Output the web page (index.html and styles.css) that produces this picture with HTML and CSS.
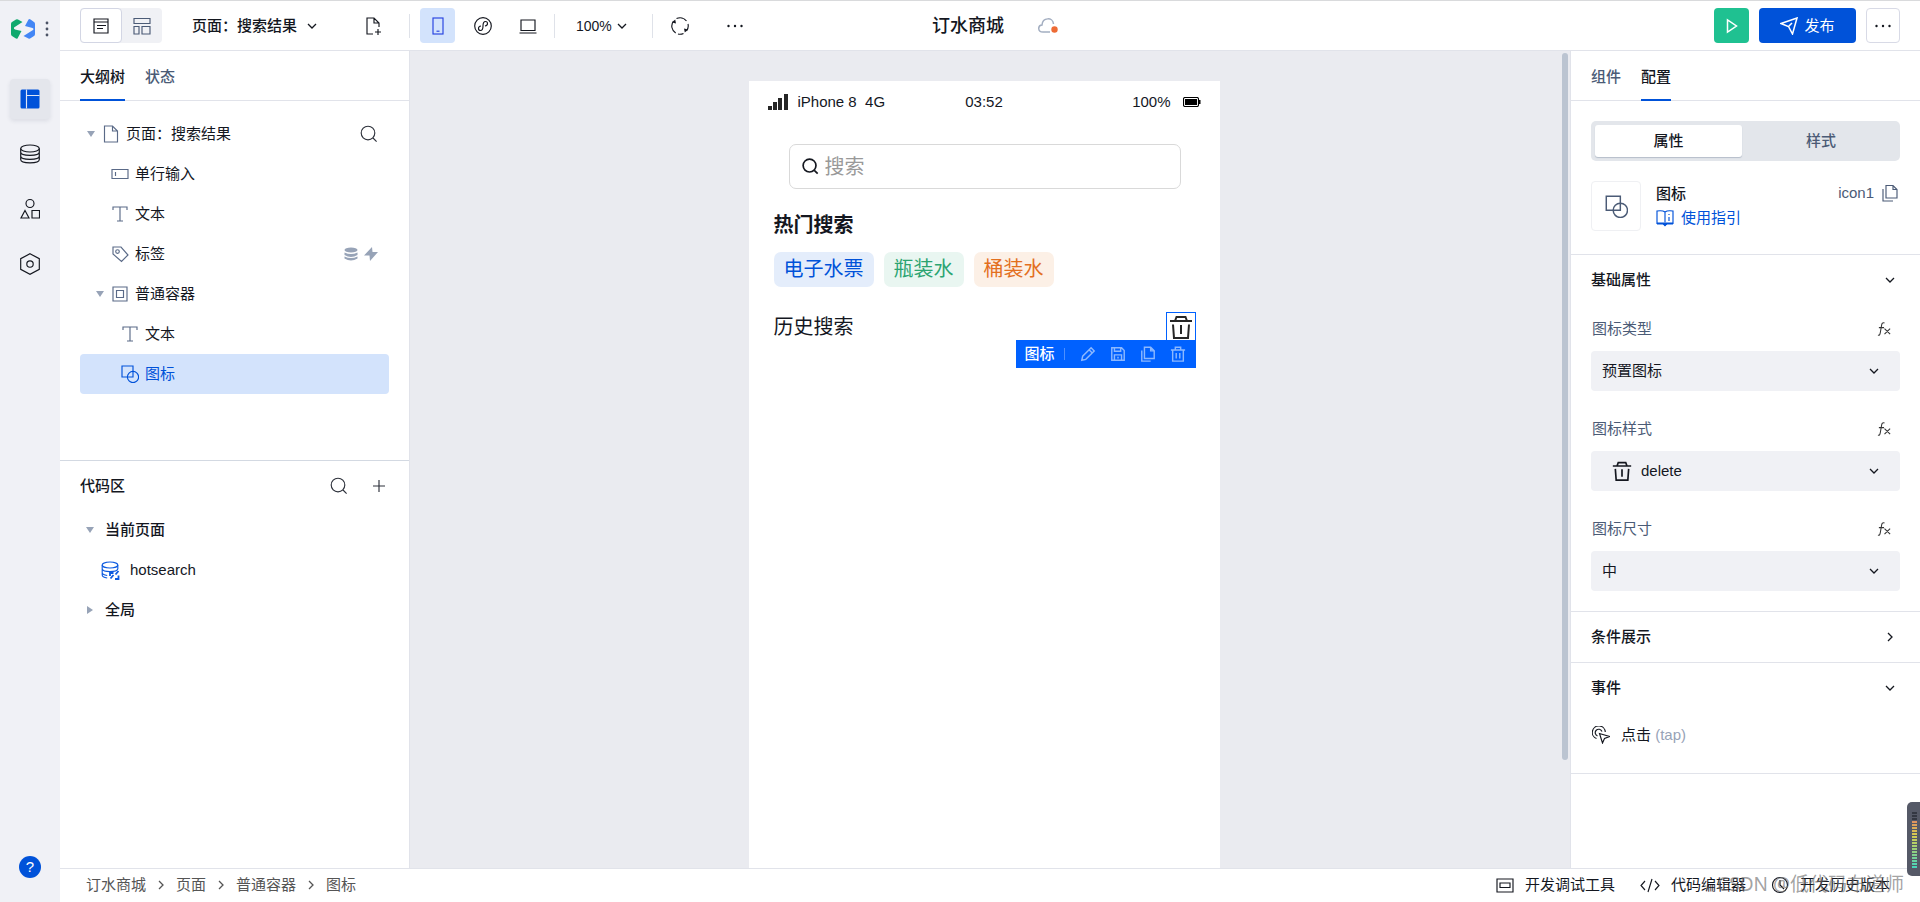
FILE: index.html
```html
<!DOCTYPE html>
<html lang="zh-CN">
<head>
<meta charset="utf-8">
<title>订水商城</title>
<link rel="stylesheet" href="styles.css">
</head>
<body>
<svg class="sprite" aria-hidden="true">
  <symbol id="chevron" viewBox="0 0 12 12"><path d="M2 4l4 4 4-4"/></symbol>
  <symbol id="chevron-right" viewBox="0 0 12 12"><path d="M4 2l4 4-4 4"/></symbol>
  <symbol id="search" viewBox="0 0 18 18"><circle cx="8" cy="8" r="6.8"/><path d="M13 13l3.6 3.6"/></symbol>
  <symbol id="type" viewBox="0 0 18 18"><path d="M2 5V2h14v3M9 2v14M6 16h6"/></symbol>
  <symbol id="shape" viewBox="0 0 18 18"><path d="M1 1h11v11H1z"/><circle cx="12" cy="12" r="5.6"/></symbol>
  <symbol id="trash" viewBox="0 0 24 24"><path d="M1 6h22M6 6l1.500-4h9L18 6M4 9.500L5 23h14l1-13.500M12 10v9"/></symbol>
  <symbol id="copy" viewBox="0 0 18 18"><path d="M5 1.500h7l4 4V14H5zM12 1.500v4h4M2 5v12h10"/></symbol>
  <symbol id="fx" viewBox="0 0 16 16"><path d="M8 1.500c-2-.8-2.800.5-3.200 3L3.500 12c-.3 2-1 3-2.500 2.500M2 6.500h5.500M8 7.500l6 6M14 7.500l-6 6"/></symbol>
  <symbol id="more" viewBox="0 0 18 18"><g fill="currentColor" stroke="none"><circle cx="2.500" cy="9" r="1.200"/><circle cx="9" cy="9" r="1.200"/><circle cx="15.500" cy="9" r="1.200"/></g></symbol>
</svg>
<div class="app">
  <nav class="rail" aria-label="主导航">
    <div class="brand">
      <svg class="logo" viewBox="0 0 24 20"><path fill="#10a96e" d="M5 .6Q6 0 7 .6L11.500 3 3 8.500Q2.500 10 4 10.500l6.500 1.500L6.500 19.500Q5.500 20 4.500 19.300L1 17Q0 16.300 0 15V5Q0 3.700 1 3z"/><path fill="#4386f5" d="M17.500.4q1-.6 2 0L23 3q1 .7 1 2v10q0 1.300-1 2l-3.500 2.300q-1 .7-2 .1L12.500 17 22 11q1.200-1.200-.5-2L14 7z"/></svg>
      <svg class="dots" viewBox="0 0 4 16"><circle cx="2" cy="2" r="1.400"/><circle cx="2" cy="8" r="1.400"/><circle cx="2" cy="14" r="1.400"/></svg>
    </div>
    <div class="rail-items">
      <button class="rail-btn active" aria-label="编辑器"><svg viewBox="0 0 20 20"><rect x=".5" y=".5" width="19" height="19" rx="1.500" fill="currentColor" stroke="none"/><path d="M6.500 .5v19M6.500 6.500h13" stroke="#dfe6f5"/></svg></button>
      <button class="rail-btn" aria-label="数据源"><svg viewBox="0 0 20 20"><ellipse cx="10" cy="4.500" rx="9.300" ry="3.500"/><path d="M.7 4.500v11c0 4.500 18.600 4.500 18.600 0v-11M.7 8c0 4.500 18.600 4.500 18.600 0M.7 12c0 4.500 18.600 4.500 18.600 0"/></svg></button>
      <button class="rail-btn" aria-label="组件库"><svg viewBox="0 0 20 20"><circle cx="10" cy="4.500" r="4"/><path d="M5 11.500L9 19H1zM12 11.500h7.500V19H12z"/></svg></button>
      <button class="rail-btn" aria-label="设置"><svg viewBox="0 0 20 22"><path d="M10 .7l9.300 5v10.600l-9.300 5-9.300-5V5.700z"/><circle cx="10" cy="11" r="3.200"/></svg></button>
    </div>
    <button class="help" aria-label="帮助">?</button>
  </nav>

  <div class="main">
    <header class="topbar">
      <div class="tools">
        <div class="view-toggle">
          <button class="view on" aria-label="页面视图"><svg viewBox="0 0 16 16"><path d="M1 1h14v14H1zM1 4h14M4 7.500h9M4 10.500h6"/></svg></button>
          <button class="view" aria-label="布局视图"><svg viewBox="0 0 18 18"><path d="M1 1.500h16v5H1zM1 9.500h5V17H1zM9 9.500h8V17H9z"/></svg></button>
        </div>
        <button class="page-pick">页面：搜索结果<svg class="chev"><use href="#chevron"/></svg></button>
        <button class="tool" aria-label="新建页面"><svg viewBox="0 0 18 18"><path d="M8 17H2V1h7l5 5v4M9 1v5h5M13 12v6M10 15h6"/></svg></button>
        <span class="bar"></span>
        <div class="devices">
          <button class="tool picked" aria-label="手机"><svg viewBox="0 0 18 18"><rect x="4" y="1" width="10" height="16"/><path d="M7.500 14.200h3"/></svg></button>
          <button class="tool" aria-label="小程序"><svg viewBox="0 0 18 18"><circle cx="9" cy="9" r="8.300"/><path d="M7 9c-3.500.5-3 4.500-.5 4.500S9 11 9 9s0-4.500 2.500-4.500 3 4-.5 4.500"/></svg></button>
          <button class="tool" aria-label="电脑"><svg viewBox="0 0 18 18"><path d="M2 3h14v10.500H2zM.5 16h17"/></svg></button>
        </div>
        <span class="bar"></span>
        <button class="zoom">100%<svg class="chev"><use href="#chevron"/></svg></button>
        <span class="bar"></span>
        <div class="actions">
          <button class="tool" aria-label="刷新"><svg viewBox="0 0 18 18"><path d="M4.700 16A8.200 8.200 0 0 1 2.500 4M5.500 1.600A8.200 8.200 0 0 1 15.500 4M17 7A8.200 8.200 0 0 1 15.500 14M12.500 16.400A8.200 8.200 0 0 1 7 17"/><path fill="currentColor" stroke="none" d="M1 5.500L4.200 2.500 5 6.500zM17 12.500L13.800 15.500 13 11.500z"/></svg></button>
          <button class="tool" aria-label="更多工具"><svg><use href="#more"/></svg></button>
        </div>
      </div>
      <div class="app-title"><h1>订水商城</h1><svg class="cloud" viewBox="0 0 20 16"><path d="M12 14H5C-.5 14-.5 7.500 4 7 4.500-1 15-1 15.500 6"/><circle cx="16.500" cy="11.500" r="3.200"/></svg></div>
      <div class="publish-group">
        <button class="run" aria-label="预览"><svg viewBox="0 0 18 18"><path d="M4.500 3v12L13.500 9z"/></svg></button>
        <button class="publish"><svg viewBox="0 0 18 18"><path d="M1 6.500L17 1l-4.500 16-4-7.500zM8.500 9.500L12 6"/></svg>发布</button>
        <button class="more" aria-label="更多"><svg><use href="#more"/></svg></button>
      </div>
    </header>

    <div class="workspace">
      <aside class="outline">
        <section class="tree-pane">
          <div class="tabs"><button class="tab on">大纲树</button><button class="tab">状态</button></div>
          <ul class="tree">
            <li class="node l0"><i class="caret"></i><svg viewBox="0 0 18 18"><path d="M2.500 1h8l5 5v11h-13zM10.500 1v5h5"/></svg><span>页面：搜索结果</span><button class="ghost" aria-label="搜索节点"><svg><use href="#search"/></svg></button></li>
            <li class="node l1"><svg viewBox="0 0 18 18"><path d="M1 4.500h16v9H1zM4.500 7v4"/></svg><span>单行输入</span></li>
            <li class="node l1"><svg><use href="#type"/></svg><span>文本</span></li>
            <li class="node l1"><svg viewBox="0 0 18 18"><path d="M2 2h8l7 8-6.500 6.500L2 9z"/><circle cx="6.500" cy="6.500" r="1.800"/></svg><span>标签</span>
              <span class="badges"><svg viewBox="0 0 14 14"><ellipse cx="7" cy="3" rx="6.500" ry="2.500"/><path d="M.5 5.500q6.500 3 13 0V8q-6.500 4-13 0zM.5 9.500q6.500 3 13 0v2q-6.500 4-13 0z"/></svg><svg viewBox="0 0 14 14"><path d="M8 0L0 8.500h5.500L6 14l8-9H8.500z"/></svg></span></li>
            <li class="node l1 open"><i class="caret"></i><svg viewBox="0 0 18 18"><path d="M2 2h14v14H2zM5.500 5.500h7v7h-7z"/></svg><span>普通容器</span></li>
            <li class="node l2"><svg><use href="#type"/></svg><span>文本</span></li>
            <li class="node l2 selected"><svg><use href="#shape"/></svg><span>图标</span></li>
          </ul>
        </section>
        <section class="code-pane">
          <div class="code-head"><h2>代码区</h2><button class="ghost" aria-label="搜索代码"><svg><use href="#search"/></svg></button><button class="ghost" aria-label="添加代码"><svg viewBox="0 0 18 18"><path d="M9 3v12M3 9h12"/></svg></button></div>
          <ul class="code-list">
            <li class="group"><i class="caret"></i>当前页面</li>
            <li class="query"><svg viewBox="0 0 19 19"><ellipse cx="9" cy="4" rx="7.800" ry="3"/><path d="M1.200 4v10c0 1.500 2 2.500 5 3M16.800 4v4M1.200 8c1 3.500 14.600 3.500 15.600 0M1.200 11.500c0 1.500 2 2.500 5 3"/><path stroke-width="1.800" d="M9 15v-3h3.500M17.500 14.500v3.500H14M9.500 17.500l3-3.500M14.500 13.500l3-3.500"/></svg>hotsearch</li>
            <li class="group"><i class="caret closed"></i>全局</li>
          </ul>
        </section>
      </aside>

      <main class="canvas">
        <div class="phone">
          <div class="status">
            <span class="carrier"><svg class="signal" viewBox="0 0 20 16"><path d="M0 12h4v4H0zM5 8h4v8H5zM10 4h4v12h-4zM16 0h4v16h-4z"/></svg>iPhone 8&nbsp; 4G</span>
            <span class="clock">03:52</span>
            <span class="power">100%<svg class="battery" viewBox="0 0 18 10"><rect x=".5" y=".5" width="15" height="9" rx="1.500" fill="none" stroke="#000"/><path d="M2 2h12v6H2zM16 3h1.500v4H16z"/></svg></span>
          </div>
          <div class="screen">
            <label class="search-box"><svg><use href="#search"/></svg><input type="text" placeholder="搜索" aria-label="搜索"></label>
            <h3>热门搜索</h3>
            <div class="tags"><span class="tag blue">电子水票</span><span class="tag green">瓶装水</span><span class="tag orange">桶装水</span></div>
            <div class="history"><span>历史搜索</span>
              <div class="target"><svg><use href="#trash"/></svg>
                <div class="floating"><b>图标</b><i class="sep"></i>
                  <div class="floating-actions">
                    <button aria-label="编辑"><svg viewBox="0 0 18 18"><path d="M2 16l1-4.500L12.500 2 16 5.500 6.500 15zM10.500 4.500l3 3"/></svg></button>
                    <button aria-label="保存"><svg viewBox="0 0 18 18"><path d="M2 2h11l3 3v11H2zM5 2v4h7V2M5 16v-6h8v6M9 12v2"/></svg></button>
                    <button aria-label="复制"><svg><use href="#copy"/></svg></button>
                    <button aria-label="删除"><svg viewBox="0 0 18 18"><path d="M1 4.500h16M6 4V1.500h6V4M3 5v12h12V5M7 8v6M11 8v6"/></svg></button>
                  </div>
                </div>
              </div>
            </div>
          </div>
        </div>
        <div class="scroll"></div>
      </main>

      <aside class="inspector">
        <div class="tabs"><button class="tab">组件</button><button class="tab on">配置</button></div>
        <div class="summary">
          <div class="segment"><button class="seg on">属性</button><button class="seg">样式</button></div>
          <div class="component">
            <div class="thumb"><svg><use href="#shape"/></svg></div>
            <div class="about"><strong>图标</strong><a href="#guide"><svg viewBox="0 0 18 18"><path d="M9 3v12M9 3C7 1.500 4 1.500 1 2v12.500h6L9 16l2-1.500h6V2c-3-.5-6-.5-8 1zM13 5v1M13 8v4"/><path stroke-width="2" d="M1 14.500h6.500L9 16l1.500-1.500H17"/></svg>使用指引</a></div>
            <button class="ident">icon1<svg><use href="#copy"/></svg></button>
          </div>
        </div>
        <section class="props">
          <button class="section-head">基础属性<svg class="chev"><use href="#chevron"/></svg></button>
          <div class="field"><div class="field-head"><label for="kind">图标类型</label><svg><use href="#fx"/></svg></div>
            <div class="select"><select id="kind"><option>预置图标</option></select><svg class="chev"><use href="#chevron"/></svg></div></div>
          <div class="field"><div class="field-head"><label for="glyph">图标样式</label><svg><use href="#fx"/></svg></div>
            <div class="select with-icon"><svg class="lead"><use href="#trash"/></svg><select id="glyph"><option>delete</option></select><svg class="chev"><use href="#chevron"/></svg></div></div>
          <div class="field"><div class="field-head"><label for="size">图标尺寸</label><svg><use href="#fx"/></svg></div>
            <div class="select"><select id="size"><option>中</option></select><svg class="chev"><use href="#chevron"/></svg></div></div>
        </section>
        <section class="plain"><button class="section-head">条件展示<svg class="chev"><use href="#chevron-right"/></svg></button></section>
        <section class="events">
          <button class="section-head">事件<svg class="chev"><use href="#chevron"/></svg></button>
          <button class="event"><svg viewBox="0 0 18 18"><path d="M4.500 12.500A6.500 6.500 0 1 1 13.300 6M5.500 10A3.500 3.500 0 1 1 10 5.500M7.500 7.500l3 9.500 2-4.500 5-2z"/></svg><span>点击 <small>(tap)</small></span></button>
        </section>
      </aside>
    </div>

    <footer class="bottombar">
      <nav class="crumbs" aria-label="组件路径"><span>订水商城</span><svg class="chev"><use href="#chevron-right"/></svg><span>页面</span><svg class="chev"><use href="#chevron-right"/></svg><span>普通容器</span><svg class="chev"><use href="#chevron-right"/></svg><span>图标</span></nav>
      <div class="dev-links">
        <button><svg viewBox="0 0 18 18"><path d="M1 3h16v13H1zM4 7h10v4.500H4z"/></svg>开发调试工具</button>
        <button><svg class="code" viewBox="0 0 20 18"><path d="M5 5L1 9.500 5 14M15 5l4 4.500-4 4.500M12 3L8 16"/></svg>代码编辑器</button>
        <button><svg viewBox="0 0 18 18"><circle cx="9" cy="9" r="7.500"/><path d="M9 4v5l4 4"/></svg>开发历史版本</button>
      </div>
    </footer>
  </div>
  <div class="watermark">CSDN @低代码布道师</div>
  <div class="meter"><div class="levels"></div></div>
</div>
</body>
</html>
```
FILE: styles.css
```css
* { box-sizing: border-box; }
body { margin: 0; font: 15px/20px "Liberation Sans", "Noto Sans CJK SC", sans-serif; color: #14171f; background: #fff; }
button { font: inherit; color: inherit; border: 0; padding: 0; background: none; display: flex; align-items: center; justify-content: center; }
svg { width: 18px; height: 18px; flex: none; fill: none; stroke: currentColor; stroke-width: 1.15; }
h1, h2, h3, ul { margin: 0; padding: 0; }
ul { list-style: none; }
.sprite { display: none; }
.chev { width: 12px; height: 12px; stroke-width: 1.3; }

.app { display: flex; height: 100vh; border-top: 1px solid #d9dadc; overflow: hidden; position: relative; }

.rail { width: 60px; flex: none; background: #f0f1f6; display: flex; flex-direction: column; align-items: center; padding: 18px 0 24px; }
.brand { display: flex; align-items: center; gap: 10px; }
.logo { width: 24px; height: 20px; stroke: none; }
.dots { width: 4px; height: 16px; fill: #4b5365; stroke: none; }
.rail-items { display: flex; flex-direction: column; gap: 15px; margin-top: 40px; }
.rail-btn { width: 40px; height: 40px; border-radius: 4px; }
.rail-btn svg { width: 20px; height: 22px; }
.rail-btn.active { background: #e4e6ec; color: #0052d9; box-shadow: 0 2px 4px rgba(40, 50, 80, .1); }
.help { margin-top: auto; width: 22px; height: 22px; border-radius: 50%; background: #0052d9; color: #fff; }

.main { flex: 1; min-width: 0; display: flex; flex-direction: column; }
.topbar { flex: none; height: 50px; border-bottom: 1px solid #e1e3ea; padding: 0 20px; display: grid; grid-template-columns: 1fr auto 1fr; align-items: center; }
.tools, .devices, .actions { display: flex; align-items: center; }
.devices { gap: 10px; margin: 0 9px 0 10px; }
.actions { gap: 20px; margin-left: 10px; }
.view-toggle { display: flex; background: #f0f1f5; border-radius: 4px; height: 35px; }
.view { width: 40px; color: #4b5b76; }
.view.on { width: 42px; background: #fff; border: 1px solid #d3d6e4; border-radius: 4px; color: #14171f; }
.view.on svg { width: 16px; height: 16px; }
.page-pick { font-weight: 500; margin: 0 38px 0 30px; gap: 9px; white-space: nowrap; }
.tool { width: 35px; height: 35px; border-radius: 4px; }
.picked { background: #d3e3fc; color: #2743e0; }
.bar { width: 1px; height: 24px; background: #dfe2e9; }
.page-pick + .tool { margin-right: 18px; }
.zoom { gap: 4px; margin: 0 24px 0 21px; font-size: 14px; }
.app-title { display: flex; align-items: center; gap: 34px; padding-left: 10px; }
.app-title h1 { font-size: 18px; line-height: 24px; font-weight: 500; }
.cloud { width: 20px; height: 16px; color: #a3aec1; stroke-width: 1.5; }
.cloud circle { fill: #ed6b35; stroke: none; }
.publish-group { display: flex; justify-content: flex-end; gap: 10px; }
.run { width: 35px; height: 35px; border-radius: 4px; background: #1fc191; color: #fff; }
.publish { width: 97px; height: 35px; border-radius: 4px; background: #0052d9; color: #fff; gap: 6px; }
.run svg, .publish svg { stroke-width: 1.5; }
.more { width: 34px; height: 35px; border: 1px solid #d8dae6; border-radius: 4px; }

.workspace { flex: 1; min-height: 0; display: flex; }
.outline { width: 350px; flex: none; border-right: 1px solid #e1e3ea; display: flex; flex-direction: column; }
.tabs { display: flex; gap: 20px; padding: 0 20px; height: 50px; border-bottom: 1px solid #e1e3ea; }
.tab { height: 50px; padding-top: 4px; border-bottom: 2px solid transparent; color: #4b5b76; font-weight: 500; }
.tab.on { color: #14171f; border-color: #0052d9; }
.tree-pane { height: 410px; border-bottom: 1px solid #d3d9e2; }
.tree { padding: 13px 20px; }
.node { display: flex; align-items: center; height: 40px; padding-right: 11px; border-radius: 4px; }
.node > svg { color: #5a6a87; margin-right: 6px; }
.l0 { padding-left: 6px; }
.l1 { padding-left: 31px; }
.l1.open { padding-left: 15px; }
.l2 { padding-left: 41px; }
.caret { border: 4px solid transparent; border-top: 6px solid #97a3b7; border-bottom: 0; flex: none; }
.node .caret { margin-left: 1px; margin-right: 7px; }
.l0 .ghost, .badges { margin-left: auto; }
.caret.closed { border: 4px solid transparent; border-left: 6px solid #97a3b7; border-right: 0; margin: 0 1px; }
.badges { display: flex; gap: 6px; }
.badges svg { width: 14px; height: 14px; fill: #97a3b7; stroke: none; }
.selected, .node.selected > svg { color: #0052d9; }
.selected { background: #d3e3fc; }
.ghost { color: #2d313b; }
.code-head { display: flex; align-items: center; gap: 22px; height: 49px; padding: 0 21px 0 20px; }
.code-head h2 { font-size: 15px; font-weight: 500; margin-right: auto; }
.code-list li { display: flex; align-items: center; height: 40px; }
.group { padding-left: 26px; gap: 11px; font-weight: 500; }
.query { padding-left: 41px; gap: 10px; }
.query svg { color: #0d5be0; width: 19px; height: 19px; }

.canvas { flex: 1; min-width: 0; background: #eaebf0; display: flex; justify-content: center; position: relative; padding: 30px 12px 0 0; }
.phone { width: 471px; background: #fff; display: flex; flex-direction: column; }
.status { display: grid; grid-template-columns: 1fr auto 1fr; align-items: center; height: 42px; padding: 0 19px; }
.carrier, .power { display: flex; align-items: center; }
.signal { width: 20px; height: 16px; fill: #262626; stroke: none; margin-right: 10px; }
.power { justify-content: flex-end; gap: 12px; }
.battery { width: 18px; height: 10px; fill: #000; stroke: none; }
.screen { padding: 21px 25px; font-size: 20px; line-height: 30px; }
.search-box { display: flex; align-items: center; gap: 6px; height: 45px; margin: 0 14px 0 15px; padding: 0 12px; border: 1px solid #d9d9d9; border-radius: 7px; }
.search-box svg { width: 17px; height: 17px; stroke-width: 1.8; }
.search-box input { flex: 1; min-width: 0; border: 0; outline: 0; padding: 0; background: none; font: inherit; }
.search-box input::placeholder { color: #999; }
.screen h3 { font-size: 20px; line-height: 30px; margin: 21px 0 12px; }
.tags { display: flex; gap: 10px; }
.tag { height: 35px; line-height: 35px; padding: 0 10px; border-radius: 7px; }
.blue { background: #e4edfb; color: #0052d9; }
.green { background: #e9f6f1; color: #2ba471; }
.orange { background: #fcf0e6; color: #e36f1e; }
.history { display: flex; justify-content: space-between; align-items: center; margin-top: 25px; margin-right: -1px; }
.target { position: relative; width: 30px; height: 30px; border: 1px solid #0061ff; display: flex; align-items: center; justify-content: center; color: #262626; }
.target > svg { width: 24px; height: 24px; stroke-width: 2; }
.floating { position: absolute; top: 27px; right: -1px; width: 180px; height: 28px; padding: 0 10px 0 9px; display: flex; align-items: center; background: #0061ff; color: #fff; font-size: 15px; line-height: 20px; }
.floating b { font-weight: 500; }
.floating-actions { display: flex; gap: 14px; margin-left: auto; }
.floating button { color: #8bb8ff; }
.floating svg { width: 16px; height: 16px; stroke-width: 1.6; }
.sep { width: 1px; height: 12px; background: #4d90ff; margin-left: 9px; }
.scroll { position: absolute; top: 2px; right: 2px; width: 6px; height: 707px; border-radius: 3px; background: #bbc4d1; }

.inspector { width: 350px; flex: none; border-left: 1px solid #e1e3ea; overflow: hidden; }
.summary { padding: 20px 20px 23px; border-bottom: 1px solid #e1e3ea; }
.segment { display: flex; height: 40px; padding: 4px 0 4px 4px; border-radius: 5px; background: #e3e6eb; }
.seg { flex: 1; border-radius: 3px; font-weight: 500; color: #4b5b76; }
.seg.on { background: #fff; color: #14171f; box-shadow: 0 1px 1px #b5bdca; flex: 0 0 147px; }
.component { display: flex; margin-top: 20px; }
.thumb { width: 50px; height: 50px; border: 1px solid #eff0f3; border-radius: 4px; display: flex; align-items: center; justify-content: center; color: #4b5b76; }
.thumb svg { width: 23px; height: 23px; }
.about { margin-left: 15px; display: flex; flex-direction: column; gap: 4px; padding-top: 3px; }
.about strong { font-weight: 500; }
.about a { color: #0052d9; text-decoration: none; display: flex; align-items: center; gap: 7px; }
.ident { margin: 2px 1px 0 auto; align-self: flex-start; color: #4b5b76; gap: 7px; }
.props { padding-bottom: 20px; border-bottom: 1px solid #e1e3ea; }
.section-head { width: 100%; height: 50px; padding: 0 24px 0 20px; justify-content: space-between; font-weight: 500; }
.field { padding: 0 20px; }
.field + .field { margin-top: 18px; }
.field-head { display: flex; justify-content: space-between; align-items: center; height: 40px; margin-bottom: 2px; padding: 0 8px 0 1px; color: #4b5b76; }
.field-head svg { width: 15px; height: 16px; color: #333; }
.props .section-head + .field { margin-top: 4px; }
.select { position: relative; }
.select select { appearance: none; width: 100%; height: 40px; border: 0; border-radius: 4px; background: #f0f1f5; color: #14171f; font: inherit; padding: 0 40px 0 11px; display: block; }
.with-icon select { padding-left: 50px; }
.select .chev { position: absolute; right: 20px; top: 14px; pointer-events: none; }
.select .lead { position: absolute; left: 21px; top: 10px; width: 20px; height: 20px; stroke-width: 2; pointer-events: none; }
.plain { border-bottom: 1px solid #e1e3ea; }
.events { padding-bottom: 16px; border-bottom: 1px solid #e1e3ea; }
.event { height: 44px; margin-left: 21px; gap: 11px; }
.event small { font-size: 15px; color: #97a3b7; }

.bottombar { flex: none; height: 34px; border-top: 1px solid #e1e3ea; padding: 0 30px 2px 26px; display: flex; align-items: center; justify-content: space-between; }
.crumbs { display: flex; align-items: center; gap: 9px; color: #555; }
.dev-links { display: flex; gap: 25px; }
.dev-links button { gap: 11px; }
.dev-links .code { width: 20px; }
.watermark { position: absolute; right: 16px; bottom: 4px; font: 19px/28px "Noto Sans", "Noto Sans CJK SC", sans-serif; color: rgba(110, 110, 110, .65); pointer-events: none; }
.meter { position: absolute; right: 0; bottom: 26px; width: 13px; height: 74px; padding: 9px 3px 8px 5px; border-radius: 5px 0 0 5px; background: #555967; }
.levels { height: 57px; background: repeating-linear-gradient(#555967 0 1px, transparent 1px 3px), linear-gradient(#333742 0 10px, #e09060 10px, #d8cb50 24px, #9dd078 38px, #45d5bd); }
```
